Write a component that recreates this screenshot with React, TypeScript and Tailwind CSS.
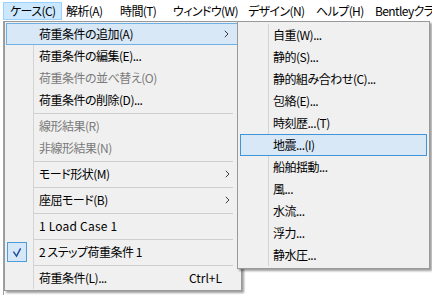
import React from 'react';

type Item =
  | { kind: 'sep' }
  | {
      kind: 'item';
      label: string;
      disabled?: boolean;
      sub?: boolean;
      hot?: boolean;
      checked?: boolean;
      shortcut?: string;
      latin?: boolean;
    };

const caseMenu: Item[] = [
  { kind: 'item', label: '荷重条件の追加(A)', sub: true, hot: true },
  { kind: 'item', label: '荷重条件の編集(E)...' },
  { kind: 'item', label: '荷重条件の並べ替え(O)', disabled: true },
  { kind: 'item', label: '荷重条件の削除(D)...' },
  { kind: 'sep' },
  { kind: 'item', label: '線形結果(R)', disabled: true },
  { kind: 'item', label: '非線形結果(N)', disabled: true },
  { kind: 'sep' },
  { kind: 'item', label: 'モード形状(M)', sub: true },
  { kind: 'sep' },
  { kind: 'item', label: '座屈モード(B)', sub: true },
  { kind: 'sep' },
  { kind: 'item', label: '1 Load Case 1', latin: true },
  { kind: 'sep' },
  { kind: 'item', label: '2 ステップ荷重条件 1', checked: true },
  { kind: 'sep' },
  { kind: 'item', label: '荷重条件(L)...', shortcut: 'Ctrl+L' },
];

const addMenu = [
  '自重(W)...',
  '静的(S)...',
  '静的組み合わせ(C)...',
  '包絡(E)...',
  '時刻歴...(T)',
  '地震...(I)',
  '船舶揺動...',
  '風...',
  '水流...',
  '浮力...',
  '静水圧...',
];

const menuBar = [
  { label: 'ケース(C)', w: 'w-[59px] pl-[6px]', open: true },
  { label: '解析(A)', w: 'w-[55px] pl-[3px]' },
  { label: '時間(T)', w: 'w-[53px] pl-[2px]' },
  { label: 'ウィンドウ(W)', w: 'w-[75px] pl-[2px]' },
  { label: 'デザイン(N)', w: 'w-[68px] pl-[2px]' },
  { label: 'ヘルプ(H)', w: 'w-[59px] pl-[2px]' },
  { label: 'Bentleyクラ', w: 'w-[60px] pl-[2px]' },
];

const Chevron = () => (
  <svg width="5" height="8" viewBox="0 0 5 8" className="shrink-0">
    <path d="M0.8 0.8 L4 4 L0.8 7.2" fill="none" stroke="#3a3a3a" strokeWidth="1" />
  </svg>
);

const Check = () => (
  <svg width="20" height="20" viewBox="0 0 20 20">
    <path d="M6 9.5 L9.5 14.5 L14 6" fill="none" stroke="#1f4f9a" strokeWidth="1.6" />
  </svg>
);

const App: React.FC = () => {
  return (
    <div className="relative w-[432px] h-[295px] bg-white overflow-hidden text-[12px] text-black font-['Noto_Sans_CJK_JP','Noto_Sans',sans-serif] [font-feature-settings:'palt'] leading-none">
      {/* menu bar */}
      <div className="h-[21px] flex items-stretch pt-[2px] pb-[1px] whitespace-nowrap tracking-[-0.6px]">
        <div className="w-[3px] shrink-0" />
        {menuBar.map(m => (
          <div
            key={m.label}
            className={`${m.w} shrink-0 flex items-center ${m.open ? 'bg-[#cce8ff] border border-[#99d1ff]' : 'border border-transparent'}`}
          >
            {m.label}
          </div>
        ))}
      </div>

      {/* window content behind the menu */}
      <div className="h-[274px] ml-[3px] border-l border-[#a0a0a0]" />

      {/* ケース menu */}
      <div className="absolute left-[4px] top-[21px] w-[238px] bg-[#f0f0f0] border border-[#999999] p-[1px] shadow-[2px_2px_2px_rgba(0,0,0,0.38)] tracking-[-0.5px]">
        {caseMenu.map((it, i) => {
          if (it.kind === 'sep') {
            return (
              <div key={i} className="h-[4px] flex">
                <div className="w-[28px] border-r border-[#d4d4d4]" />
                <div className="w-[199px] flex items-center">
                  <div className="h-px w-full bg-[#cfcfcf]" />
                </div>
              </div>
            );
          }
          return (
            <div
              key={i}
              className={`h-[22px] flex items-center ${it.hot ? 'bg-[#d9e8f7] border border-[#6fb0e4]' : ''} ${it.disabled ? 'text-[#7a7a7a]' : ''}`}
            >
              <div className={`h-full w-[28px] shrink-0 flex items-center ${it.hot ? 'border-r border-transparent -ml-px' : 'border-r border-[#d4d4d4]'}`}>
                {it.checked && (
                  <div className="ml-[1px] w-[20px] h-[20px] bg-[#d5e7f8] border border-[#4d9ddb] flex items-center justify-center">
                    <Check />
                  </div>
                )}
              </div>
              <div className="flex-1 flex items-center pl-[5px] pr-[10px] whitespace-nowrap">
                <span className={`flex-1 ${it.latin ? 'tracking-[0.2px]' : ''}`}>{it.label}</span>
                {it.shortcut && <span className="mr-[8px] tracking-normal">{it.shortcut}</span>}
                {it.sub && <Chevron />}
              </div>
            </div>
          );
        })}
      </div>

      {/* 荷重条件の追加 submenu */}
      <div className="absolute left-[237px] top-[21px] w-[193px] bg-[#f0f0f0] border border-[#999999] p-[2px] shadow-[2px_2px_2px_rgba(0,0,0,0.38)] tracking-[-0.5px]">
        {addMenu.map((label, i) => {
          const hot = i === 5;
          return (
            <div
              key={label}
              className={`h-[22px] flex items-center ${hot ? 'bg-[#d9e8f7] border border-[#3f95d8]' : ''}`}
            >
              <div className={`h-full w-[29px] shrink-0 ${hot ? '-ml-px' : 'border-r border-[#d4d4d4]'}`} />
              <span className="pl-[4px] whitespace-nowrap">{label}</span>
            </div>
          );
        })}
      </div>
    </div>
  );
};

export default App;
